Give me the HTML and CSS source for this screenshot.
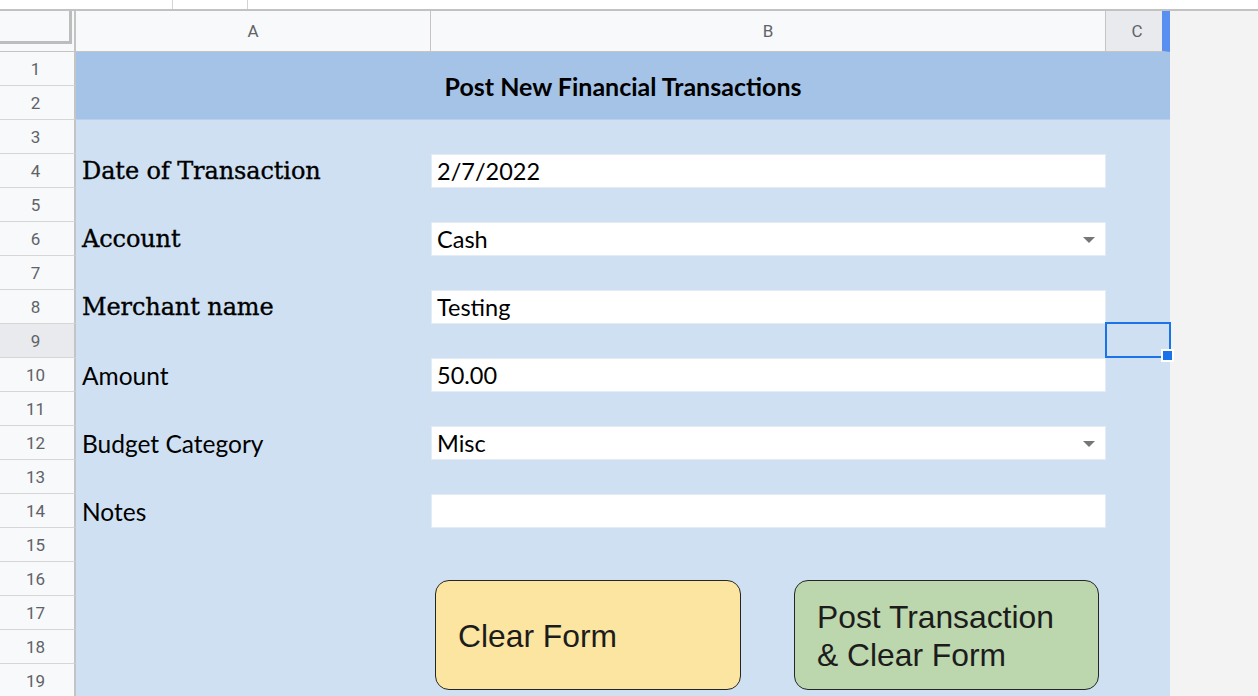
FILE: index.html
```html
<!DOCTYPE html>
<html lang="en">
<head>
<meta charset="utf-8">
<title>Post New Financial Transactions</title>
<link rel="stylesheet" href="styles.css">
</head>
<body>
<div class="topbar"><span class="tb-seg tb-a"></span><span class="tb-seg tb-b"></span></div>
<div class="main">
  <div class="sheet">
    <div class="corner"><div class="freeze"></div></div>
    <div class="colhead">A</div>
    <div class="colhead">B</div>
    <div class="colhead colsel"><span>C</span></div>

    <div class="rowhead">1</div>
    <div class="title">Post New Financial Transactions</div>
    <div class="rowhead">2</div>

    <div class="rowhead">3</div><div class="cell"></div><div class="cell"></div><div class="cell"></div>

    <div class="rowhead">4</div>
    <div class="cell label slab">Date of Transaction</div>
    <div class="cell input">2/7/2022</div>
    <div class="cell"></div>

    <div class="rowhead">5</div><div class="cell"></div><div class="cell"></div><div class="cell"></div>

    <div class="rowhead">6</div>
    <div class="cell label slab">Account</div>
    <div class="cell input"><span>Cash</span><span class="arrow"></span></div>
    <div class="cell"></div>

    <div class="rowhead">7</div><div class="cell"></div><div class="cell"></div><div class="cell"></div>

    <div class="rowhead">8</div>
    <div class="cell label slab">Merchant name</div>
    <div class="cell input">Testing</div>
    <div class="cell"></div>

    <div class="rowhead rowsel">9</div><div class="cell"></div><div class="cell"></div>
    <div class="cell selcell"><div class="selbox"></div><div class="handle"></div></div>

    <div class="rowhead">10</div>
    <div class="cell label">Amount</div>
    <div class="cell input">50.00</div>
    <div class="cell"></div>

    <div class="rowhead">11</div><div class="cell"></div><div class="cell"></div><div class="cell"></div>

    <div class="rowhead">12</div>
    <div class="cell label">Budget Category</div>
    <div class="cell input"><span>Misc</span><span class="arrow"></span></div>
    <div class="cell"></div>

    <div class="rowhead">13</div><div class="cell"></div><div class="cell"></div><div class="cell"></div>

    <div class="rowhead">14</div>
    <div class="cell label">Notes</div>
    <div class="cell input"></div>
    <div class="cell"></div>

    <div class="rowhead">15</div><div class="cell"></div><div class="cell"></div><div class="cell"></div>

    <div class="rowhead">16</div>
    <div class="cell spacer"></div>
    <div class="buttons">
      <div class="btn btn-clear">Clear Form</div>
      <div class="btn btn-post">Post Transaction<br>&amp; Clear Form</div>
    </div>
    <div class="rowhead">17</div>
    <div class="rowhead">18</div>
    <div class="rowhead">19</div>
  </div>
  <div class="filler"></div>
</div>
</body>
</html>
```

FILE: styles.css
```css
html, body {
  margin: 0;
  padding: 0;
  background: #ffffff;
  overflow: hidden;
}

body {
  width: 1258px;
  height: 696px;
  font-family: Roboto, "Liberation Sans", sans-serif;
}

.topbar {
  height: 9px;
  display: flex;
  border-bottom: 2px solid #c2c2c2;
  background: #ffffff;
}

.tb-seg {
  display: block;
  height: 9px;
  border-right: 1px solid #d4d4d4;
}

.tb-a { width: 172px; }
.tb-b { width: 74px; }

.main {
  display: flex;
  height: 685px;
}

.sheet {
  width: 1170px;
  flex: none;
  display: grid;
  grid-template-columns: 76px 355px 675px 64px;
  grid-template-rows: 41px repeat(19, 34px);
  background: #cfe0f2;
}

.filler {
  flex: 1;
  background: #f3f3f3;
}

.corner {
  background: #f8f9fa;
  border-bottom: 1px solid #c4c4c4;
  border-right: 2px solid #c4c4c4;
  box-sizing: border-box;
}

.freeze {
  width: 72px;
  height: 33px;
  box-sizing: border-box;
  border-right: 3px solid #bdbdbd;
  border-bottom: 3px solid #bdbdbd;
}

.colhead {
  background: #f8f9fa;
  border-bottom: 1px solid #c4c4c4;
  border-right: 1px solid #c4c4c4;
  box-sizing: border-box;
  display: flex;
  align-items: center;
  justify-content: center;
  color: #5f6368;
  font-size: 17px;
}

.colsel {
  background: #e8eaed;
  border-right: 8px solid #5a8ff2;
  padding-left: 6px;
}

.rowhead {
  background: #f8f9fa;
  border-right: 2px solid #c4c4c4;
  border-bottom: 1px solid #d6d6d6;
  box-sizing: border-box;
  display: flex;
  align-items: center;
  justify-content: center;
  color: #5f6368;
  font-size: 17px;
  padding-right: 3px;
}

.rowsel {
  background: #e8eaed;
}

.title {
  grid-column: span 3;
  grid-row: span 2;
  background: #a5c3e6;
  border-bottom: 1px solid #b9d0ec;
  box-sizing: border-box;
  display: flex;
  align-items: center;
  justify-content: center;
  font-family: Lato, "Open Sans", sans-serif;
  font-weight: 700;
  font-size: 25px;
  color: #000000;
  padding-bottom: 0;
}

.cell {
  box-sizing: border-box;
  min-width: 0;
}

.label {
  display: flex;
  align-items: center;
  padding-left: 6px;
  font-family: Lato, "Open Sans", sans-serif;
  font-size: 24.5px;
  color: #000000;
  white-space: nowrap;
}

.slab {
  font-family: "DejaVu Serif", serif;
  font-size: 24px;
  -webkit-text-stroke: 0.35px #000000;
  letter-spacing: -0.1px;
}

.input {
  background: #ffffff;
  box-shadow: inset 0 0 0 1px #e4ebf4;
  display: flex;
  align-items: center;
  justify-content: space-between;
  padding-left: 6px;
  padding-right: 11px;
  font-family: Lato, "Open Sans", sans-serif;
  font-size: 23.5px;
  color: #000000;
}

.arrow {
  width: 0;
  height: 0;
  border-left: 6px solid transparent;
  border-right: 6px solid transparent;
  border-top: 6px solid #767676;
  margin-top: 2px;
}

.selcell {
  position: relative;
}

.selbox {
  position: absolute;
  top: -2px;
  left: -1px;
  right: -1px;
  bottom: 0;
  border: 2px solid #1a73e8;
}

.handle {
  position: absolute;
  left: 55px;
  top: 25px;
  width: 9px;
  height: 9px;
  background: #1a73e8;
  border: 2px solid #ffffff;
}

.spacer {
  grid-row: span 4;
}

.buttons {
  grid-column: span 2;
  grid-row: span 4;
  display: flex;
  align-items: flex-start;
  gap: 53px;
  padding: 18px 0 0 4px;
}

.btn {
  flex: none;
  height: 110px;
  box-sizing: border-box;
  border: 1.5px solid #262626;
  border-radius: 14px;
  display: flex;
  align-items: center;
  padding-left: 22px;
  padding-top: 1px;
  font-family: "Liberation Sans", Arial, sans-serif;
  font-size: 31.8px;
  line-height: 38px;
  color: #1c1c1c;
}

.btn-clear {
  width: 306px;
  background: #fbe5a0;
}

.btn-post {
  width: 305px;
  background: #bcd6ad;
}
```
